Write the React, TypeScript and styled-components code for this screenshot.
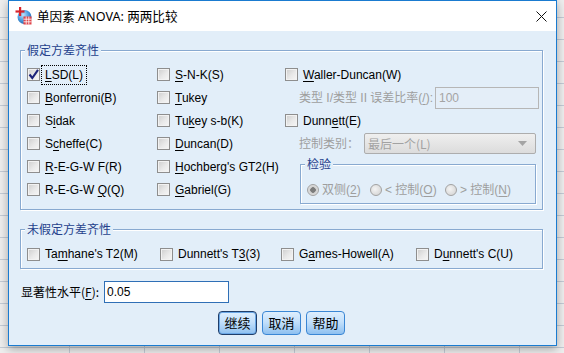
import React from "react";
import styled, { createGlobalStyle } from "styled-components";

const GlobalStyle = createGlobalStyle`
  html, body { margin: 0; padding: 0; }
  body {
    font-family: "Liberation Sans", "Noto Sans CJK SC", sans-serif;
    font-size: 12px;
    line-height: 14px;
    color: #000;
  }
`;

const Desktop = styled.div`
  width: 564px;
  height: 353px;
  overflow: hidden;
  box-sizing: border-box;
  padding-left: 8px;
  background-color: #eeeeee;
  background-image:
    linear-gradient(to right, #c3cbd5 1px, transparent 1px),
    linear-gradient(to bottom, #c3cbd5 1px, transparent 1px);
  background-size: 75px 100%, 100% 22px;
  background-position: 69px 0, 0 17px;
`;

const Window = styled.div`
  width: 549px;
  box-sizing: border-box;
  border: 1px solid #1a7bd0;
  background: #e2eef9;
  box-shadow: 0 3px 9px rgba(0, 0, 0, 0.32);
`;

const TitleBar = styled.div`
  height: 30px;
  background: #ffffff;
  display: flex;
  align-items: center;
  padding-left: 6px;
  padding-right: 9px;
`;

const TitleText = styled.span`
  margin-left: 5px;
  font-family: "Noto Sans", "Noto Sans CJK SC", sans-serif;
  font-size: 12.6px;
  line-height: 16px;
  margin-top: 2px;
`;

const CloseIcon = styled.svg`
  margin-left: auto;
  width: 11px;
  height: 11px;
`;

const Body = styled.div`
  padding: 19px 13px 10px 11px;
  display: flex;
  flex-direction: column;
`;

const Group = styled.div<{ $pt: number; $pb: number; $w?: number; $h?: number }>`
  position: relative;
  box-sizing: border-box;
  width: ${(p) => (p.$w ? `${p.$w}px` : "100%")};
  ${(p) => (p.$h ? `height: ${p.$h}px;` : "")}
  border: 1px solid #88a9d0;
  box-shadow: 1px 1px 0 #ffffff, inset 1px 1px 0 #ffffff;
  padding: ${(p) => p.$pt}px 0 ${(p) => p.$pb}px 6px;
  display: flex;
`;

const Legend = styled.span`
  position: absolute;
  top: -8px;
  left: 4px;
  padding: 0 2px;
  background: #e2eef9;
  color: #25418c;
  font-family: "Noto Sans CJK SC", sans-serif;
  font-size: 12px;
  line-height: 14px;
`;

const CheckGrid = styled.div`
  display: grid;
  grid-template-columns: 130px 128px;
  grid-auto-rows: 23px;
  align-content: start;
`;

const RightCol = styled.div`
  display: flex;
  flex-direction: column;
`;

const Row = styled.div<{ $indent?: number }>`
  height: 23px;
  display: flex;
  align-items: center;
  padding-left: ${(p) => p.$indent ?? 0}px;
`;

const CheckItem = styled.div<{ $w?: number }>`
  display: flex;
  align-items: center;
  gap: 5px;
  ${(p) => (p.$w ? `width: ${p.$w}px;` : "")}
  flex-shrink: 0;
  white-space: nowrap;
`;

const Box = styled.span`
  width: 13px;
  height: 13px;
  box-sizing: border-box;
  border: 1px solid #8e8e8e;
  background: linear-gradient(135deg, #cdcdcd 0%, #e9e9e9 55%, #f7f7f7 100%);
  box-shadow: inset 0 0 0 1px #f2f2f2;
  display: flex;
  align-items: center;
  justify-content: center;
  flex-shrink: 0;
`;

const LabelText = styled.span<{ $focus?: boolean }>`
  color: #000;
  ${(p) =>
    p.$focus
      ? `outline: 1px dotted #000; outline-offset: 2px; padding: 0 1px; margin-left: -1px;`
      : ""}
`;

const U = styled.span`
  text-decoration: underline;
  text-underline-offset: 2px;
`;

const Muted = styled.span<{ $w?: number }>`
  color: #9e9e9e;
  white-space: nowrap;
  ${(p) => (p.$w ? `width: ${p.$w}px; flex-shrink: 0;` : "")}
`;

const DisabledInput = styled.div`
  width: 104px;
  height: 22px;
  box-sizing: border-box;
  border: 1px solid #b6b6b6;
  background: #e4eef8;
  color: #a4a4a4;
  display: flex;
  align-items: center;
  padding-left: 3px;
`;

const Select = styled.div`
  width: 172px;
  height: 21px;
  box-sizing: border-box;
  border: 1px solid #adadad;
  border-radius: 2px;
  background: linear-gradient(to bottom, #efefef, #dcdcdc);
  display: flex;
  align-items: center;
  padding: 0 8px 0 3px;
  color: #a2a2a2;
  font-family: "Noto Sans CJK SC", sans-serif;
`;

const Arrow = styled.svg`
  margin-left: auto;
  width: 9px;
  height: 5px;
`;

const RadioRow = styled.div`
  display: flex;
  align-items: center;
  height: 14px;
`;

const RadioItem = styled.div<{ $w?: number }>`
  display: flex;
  align-items: center;
  gap: 3px;
  ${(p) => (p.$w ? `width: ${p.$w}px;` : "")}
  flex-shrink: 0;
  white-space: nowrap;
`;

const Radio = styled.span<{ $on?: boolean }>`
  width: 12px;
  height: 12px;
  box-sizing: border-box;
  border-radius: 50%;
  border: 1px solid #a2a2a2;
  background: ${(p) =>
    p.$on
      ? "radial-gradient(circle, #7c7c7c 0 2.5px, #cfcfcf 3px, #ededed 100%)"
      : "radial-gradient(circle at 40% 40%, #f4f4f4 0, #cfcfcf 100%)"};
  flex-shrink: 0;
`;

const TestGroupWrap = styled.div`
  margin-top: 9px;
  margin-left: 15px;
`;

const SecondGroupWrap = styled.div`
  margin-top: 19px;
`;

const SigRow = styled.div`
  margin-top: 12px;
  display: flex;
  align-items: center;
  padding-left: 1px;
`;

const SigLabel = styled.span`
  width: 83px;
  flex-shrink: 0;
  font-family: "Noto Sans CJK SC", sans-serif;
  white-space: nowrap;
`;

const SigInput = styled.div`
  width: 125px;
  height: 22px;
  box-sizing: border-box;
  border: 1px solid #2f6fb6;
  background: #ffffff;
  display: flex;
  align-items: center;
  padding-left: 2px;
`;

const ButtonRow = styled.div`
  margin-top: 8px;
  display: flex;
  justify-content: center;
  gap: 5px;
`;

const Btn = styled.button<{ $def?: boolean }>`
  width: 39px;
  height: 24px;
  padding: 0;
  box-sizing: border-box;
  border: 1px solid ${(p) => (p.$def ? "#1f3e6a" : "#3a86d4")};
  box-shadow: ${(p) => (p.$def ? "inset 0 0 0 1px #6aa7e6" : "none")};
  border-radius: 4px;
  background: linear-gradient(to bottom, #deeefd 0%, #c3e0fb 45%, #8ec0f0 100%);
  font-family: "Noto Sans CJK SC", sans-serif;
  font-size: 13px;
  line-height: 16px;
  color: #000;
`;

type Lbl = { a: string; u: string; b: string };
const L = (a: string, u: string, b: string): Lbl => ({ a, u, b });

const Text = ({ l }: { l: Lbl }) => (
  <>
    {l.a}
    <U>{l.u}</U>
    {l.b}
  </>
);

const Check = ({
  l,
  checked,
  focus,
  w,
}: {
  l: Lbl;
  checked?: boolean;
  focus?: boolean;
  w?: number;
}) => (
  <CheckItem $w={w}>
    <Box>
      {checked && (
        <svg width="11" height="11" viewBox="0 0 11 11">
          <path d="M1.5 5.5 L4.3 9 L10 0.8" fill="none" stroke="#1c237a" strokeWidth="2.1" />
        </svg>
      )}
    </Box>
    <LabelText $focus={focus}>
      <Text l={l} />
    </LabelText>
  </CheckItem>
);

const gridItems: { l: Lbl; checked?: boolean; focus?: boolean }[] = [
  { l: L("", "L", "SD(L)"), checked: true, focus: true },
  { l: L("", "S", "-N-K(S)") },
  { l: L("", "B", "onferroni(B)") },
  { l: L("", "T", "ukey") },
  { l: L("S", "i", "dak") },
  { l: L("Tu", "k", "ey s-b(K)") },
  { l: L("S", "c", "heffe(C)") },
  { l: L("", "D", "uncan(D)") },
  { l: L("", "R", "-E-G-W F(R)") },
  { l: L("", "H", "ochberg's GT2(H)") },
  { l: L("R-E-G-W ", "Q", "(Q)") },
  { l: L("", "G", "abriel(G)") },
];

const TitleIcon = () => (
  <svg width="17" height="18" viewBox="0 0 17 18">
    <defs>
      <radialGradient id="globe" cx="0.4" cy="0.35" r="0.7">
        <stop offset="0" stopColor="#bfe3fb" />
        <stop offset="0.55" stopColor="#4d9de0" />
        <stop offset="1" stopColor="#1f63ad" />
      </radialGradient>
    </defs>
    <circle cx="9.5" cy="10" r="7" fill="url(#globe)" />
    <rect x="4" y="0" width="2.2" height="9" fill="#d8242b" />
    <rect x="0.5" y="3.4" width="9" height="2.2" fill="#d8242b" />
    <rect x="8.5" y="9.5" width="8" height="8" fill="#e0444a" />
    <path d="M8.5 12.2 H16.5 M8.5 14.8 H16.5 M11.2 9.5 V17.5 M13.8 9.5 V17.5" stroke="#ffffff" strokeWidth="0.8" />
  </svg>
);

export default function App() {
  return (
    <>
      <GlobalStyle />
      <Desktop>
        <Window>
          <TitleBar>
            <TitleIcon />
            <TitleText>单因素 ANOVA: 两两比较</TitleText>
            <CloseIcon viewBox="0 0 11 11">
              <path d="M0.5 0.5 L10.5 10.5 M10.5 0.5 L0.5 10.5" stroke="#111" strokeWidth="1" />
            </CloseIcon>
          </TitleBar>
          <Body>
            <Group $pt={12} $pb={5}>
              <Legend>假定方差齐性</Legend>
              <CheckGrid>
                {gridItems.map((it, i) => (
                  <Check key={i} l={it.l} checked={it.checked} focus={it.focus} />
                ))}
              </CheckGrid>
              <RightCol>
                <Row>
                  <Check l={L("", "W", "aller-Duncan(W)")} />
                </Row>
                <Row $indent={14}>
                  <Muted $w={136}>
                    类型 I/类型 II 误差比率(<U>/</U>):
                  </Muted>
                  <DisabledInput>100</DisabledInput>
                </Row>
                <Row>
                  <Check l={L("Dunn", "e", "tt(E)")} />
                </Row>
                <Row $indent={14}>
                  <Muted $w={65}>控制类别：</Muted>
                  <Select>
                    最后一个(L)
                    <Arrow viewBox="0 0 9 5">
                      <path d="M0 0 H9 L4.5 5 Z" fill="#a4a4a4" />
                    </Arrow>
                  </Select>
                </Row>
                <TestGroupWrap>
                  <Group $pt={18} $pb={0} $w={236} $h={40}>
                    <Legend>检验</Legend>
                    <RadioRow>
                      <RadioItem $w={63}>
                        <Radio $on />
                        <Muted>
                          双侧(<U>2</U>)
                        </Muted>
                      </RadioItem>
                      <RadioItem $w={75}>
                        <Radio />
                        <Muted>
                          &lt; 控制(<U>O</U>)
                        </Muted>
                      </RadioItem>
                      <RadioItem>
                        <Radio />
                        <Muted>
                          &gt; 控制(<U>N</U>)
                        </Muted>
                      </RadioItem>
                    </RadioRow>
                  </Group>
                </TestGroupWrap>
              </RightCol>
            </Group>

            <SecondGroupWrap>
              <Group $pt={17} $pb={0} $h={40}>
                <Legend>未假定方差齐性</Legend>
                <RadioRow>
                  <Check w={133} l={L("Ta", "m", "hane's T2(M)")} />
                  <Check w={121} l={L("Dunnett's T", "3", "(3)")} />
                  <Check w={135} l={L("G", "a", "mes-Howell(A)")} />
                  <Check l={L("D", "u", "nnett's C(U)")} />
                </RadioRow>
              </Group>
            </SecondGroupWrap>

            <SigRow>
              <SigLabel>
                显著性水平(<U>F</U>):
              </SigLabel>
              <SigInput>0.05</SigInput>
            </SigRow>

            <ButtonRow>
              <Btn $def>继续</Btn>
              <Btn>取消</Btn>
              <Btn>帮助</Btn>
            </ButtonRow>
          </Body>
        </Window>
      </Desktop>
    </>
  );
}
